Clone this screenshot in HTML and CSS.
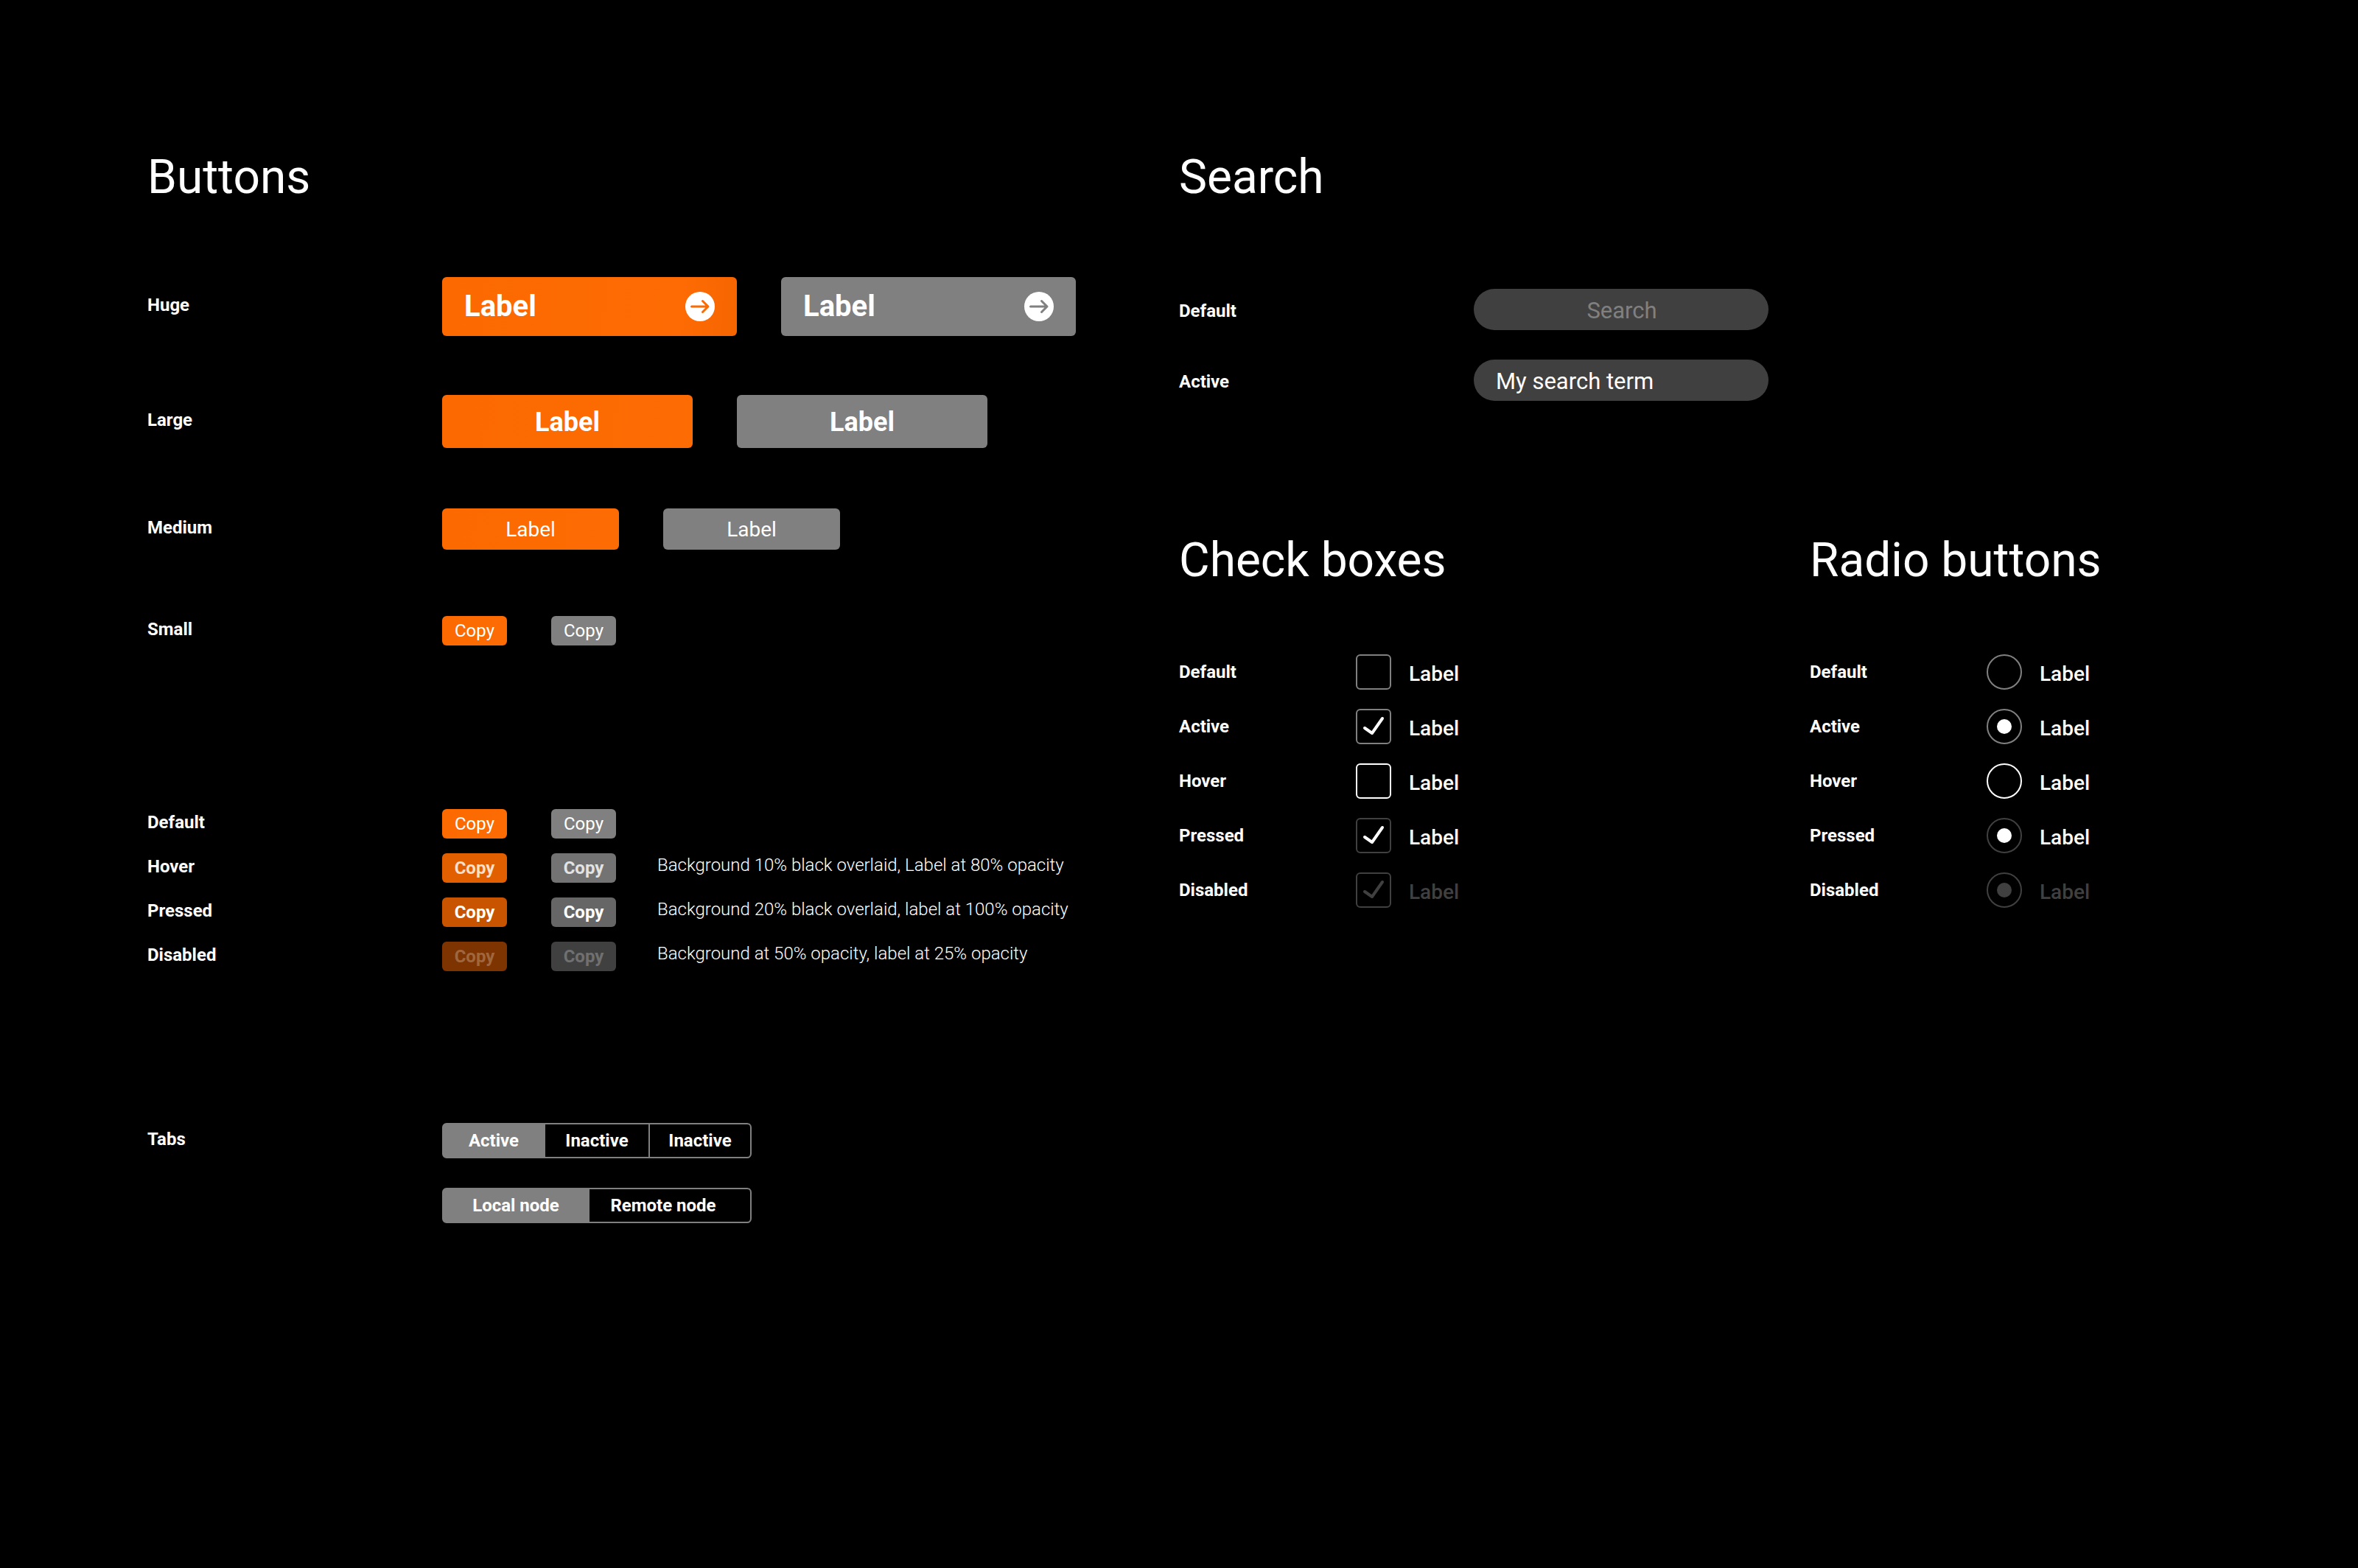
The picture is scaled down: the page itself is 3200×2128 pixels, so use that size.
FILE: index.html
```html
<!DOCTYPE html>
<html lang="en">
<head>
<meta charset="utf-8">
<meta name="viewport" content="width=device-width, initial-scale=1">
<title>Controls</title>
<link rel="stylesheet" href="styles.css">
</head>
<body>
<main class="sheet">
  <section class="column">
    <h1 class="heading">Buttons</h1>
    <div class="sizes">
      <div class="row row-huge">
        <span class="name">Huge</span>
        <button type="button" class="btn btn-huge primary">Label
          <svg class="arrow" viewBox="0 0 40 40" aria-hidden="true"><circle cx="20" cy="20" r="20"/><path d="M8.500 20H31M23.500 12.500L31 20L23.500 27.500"/></svg>
        </button>
        <button type="button" class="btn btn-huge secondary">Label
          <svg class="arrow" viewBox="0 0 40 40" aria-hidden="true"><circle cx="20" cy="20" r="20"/><path d="M8.500 20H31M23.500 12.500L31 20L23.500 27.500"/></svg>
        </button>
      </div>
      <div class="row row-large">
        <span class="name">Large</span>
        <button type="button" class="btn btn-large primary">Label</button>
        <button type="button" class="btn btn-large secondary">Label</button>
      </div>
      <div class="row row-medium">
        <span class="name">Medium</span>
        <button type="button" class="btn btn-medium primary">Label</button>
        <button type="button" class="btn btn-medium secondary">Label</button>
      </div>
      <div class="row">
        <span class="name">Small</span>
        <button type="button" class="btn btn-small primary">Copy</button>
        <button type="button" class="btn btn-small secondary">Copy</button>
      </div>
    </div>
    <div class="states">
      <div class="row">
        <span class="name">Default</span>
        <button type="button" class="btn btn-small primary">Copy</button>
        <button type="button" class="btn btn-small secondary">Copy</button>
      </div>
      <div class="row">
        <span class="name">Hover</span>
        <button type="button" class="btn btn-small primary is-hover">Copy</button>
        <button type="button" class="btn btn-small secondary is-hover">Copy</button>
        <span class="note">Background 10% black overlaid, Label at 80% opacity</span>
      </div>
      <div class="row">
        <span class="name">Pressed</span>
        <button type="button" class="btn btn-small primary is-pressed">Copy</button>
        <button type="button" class="btn btn-small secondary is-pressed">Copy</button>
        <span class="note">Background 20% black overlaid, label at 100% opacity</span>
      </div>
      <div class="row">
        <span class="name">Disabled</span>
        <button type="button" class="btn btn-small primary" disabled>Copy</button>
        <button type="button" class="btn btn-small secondary" disabled>Copy</button>
        <span class="note">Background at 50% opacity, label at 25% opacity</span>
      </div>
    </div>
    <div class="tab-sets">
      <div class="row">
        <span class="name">Tabs</span>
        <div class="tabs tabs-three" role="tablist">
          <button type="button" class="tab" role="tab" aria-selected="true">Active</button>
          <button type="button" class="tab divided" role="tab" aria-selected="false">Inactive</button>
          <button type="button" class="tab" role="tab" aria-selected="false">Inactive</button>
        </div>
      </div>
      <div class="row">
        <span class="name"></span>
        <div class="tabs tabs-two" role="tablist">
          <button type="button" class="tab" role="tab" aria-selected="true">Local node</button>
          <button type="button" class="tab" role="tab" aria-selected="false">Remote node</button>
        </div>
      </div>
    </div>
  </section>

  <div class="column">
    <section>
      <h1 class="heading">Search</h1>
      <div class="searches">
        <div class="row">
          <label class="name" for="search-default">Default</label>
          <input class="search" id="search-default" type="text" placeholder="Search">
        </div>
        <div class="row">
          <label class="name" for="search-active">Active</label>
          <input class="search" id="search-active" type="text" value="My search term">
        </div>
      </div>
    </section>
    <div class="choices">
      <section>
        <h1 class="heading">Check boxes</h1>
        <div class="options">
          <div class="option">
            <span class="name">Default</span>
            <label class="choice"><span class="box"><input type="checkbox"></span><span class="text">Label</span></label>
          </div>
          <div class="option">
            <span class="name">Active</span>
            <label class="choice"><span class="box"><input type="checkbox" checked><svg class="tick" viewBox="0 0 48 48" aria-hidden="true"><path d="M12 26L22 33L36 13"/></svg></span><span class="text">Label</span></label>
          </div>
          <div class="option">
            <span class="name">Hover</span>
            <label class="choice is-hover"><span class="box"><input type="checkbox"></span><span class="text">Label</span></label>
          </div>
          <div class="option">
            <span class="name">Pressed</span>
            <label class="choice is-pressed"><span class="box"><input type="checkbox" checked><svg class="tick" viewBox="0 0 48 48" aria-hidden="true"><path d="M12 26L22 33L36 13"/></svg></span><span class="text">Label</span></label>
          </div>
          <div class="option">
            <span class="name">Disabled</span>
            <label class="choice is-disabled"><span class="box"><input type="checkbox" checked disabled><svg class="tick" viewBox="0 0 48 48" aria-hidden="true"><path d="M12 26L22 33L36 13"/></svg></span><span class="text">Label</span></label>
          </div>
        </div>
      </section>
      <section>
        <h1 class="heading">Radio buttons</h1>
        <div class="options">
          <div class="option">
            <span class="name">Default</span>
            <label class="choice"><span class="box"><input type="radio" name="radio-default"></span><span class="text">Label</span></label>
          </div>
          <div class="option">
            <span class="name">Active</span>
            <label class="choice"><span class="box"><input type="radio" name="radio-active" checked></span><span class="text">Label</span></label>
          </div>
          <div class="option">
            <span class="name">Hover</span>
            <label class="choice is-hover"><span class="box"><input type="radio" name="radio-hover"></span><span class="text">Label</span></label>
          </div>
          <div class="option">
            <span class="name">Pressed</span>
            <label class="choice is-pressed"><span class="box"><input type="radio" name="radio-pressed" checked></span><span class="text">Label</span></label>
          </div>
          <div class="option">
            <span class="name">Disabled</span>
            <label class="choice is-disabled"><span class="box"><input type="radio" name="radio-disabled" checked disabled></span><span class="text">Label</span></label>
          </div>
        </div>
      </section>
    </div>
  </div>
</main>
</body>
</html>
```
FILE: styles.css
```css
* {
  box-sizing: border-box;
}

body {
  margin: 0;
  background: #000;
  color: #fff;
  font-family: Roboto, "Liberation Sans", sans-serif;
  font-size: 24px;
  line-height: 28px;
}

button,
input {
  margin: 0;
  font: inherit;
  color: inherit;
}

.sheet {
  display: grid;
  grid-template-columns: minmax(0, 7fr) minmax(0, 8fr);
  padding: 200px 0 200px 200px;
}

.heading {
  margin: 0;
  padding-top: 1px;
  font-size: 64px;
  line-height: 79px;
  font-weight: 400;
}

.row,
.option {
  display: flex;
  align-items: center;
}

.row {
  gap: 60px;
}

.name {
  flex: none;
  font-weight: 700;
}

.row .name {
  width: 340px;
  padding-bottom: 4px;
}

.option .name {
  width: 240px;
}

.sizes {
  margin-top: 96px;
}

.row-huge {
  margin-bottom: 80px;
}

.row-large {
  margin-bottom: 82px;
}

.row-medium {
  margin-bottom: 90px;
}

.states {
  display: grid;
  gap: 20px;
  margin-top: 222px;
}

.tab-sets {
  display: grid;
  gap: 40px;
  margin-top: 206px;
}

/* Buttons */

.btn {
  display: flex;
  flex: none;
  align-items: center;
  justify-content: center;
  padding: 0;
  border: 0;
  border-radius: 6px;
}

.primary {
  --fill: #fc6a03;
  background: linear-gradient(95deg, #fb6900, #fd6b04);
}

.secondary {
  --fill: #808080;
  background: var(--fill);
}

.btn-huge {
  justify-content: space-between;
  width: 400px;
  height: 80px;
  padding: 0 30px;
  font-size: 40px;
  line-height: 48px;
  font-weight: 700;
}

.btn-huge.primary {
  background: linear-gradient(95deg, #fb6900, #fe6b04 80%, #f56500);
}

.btn-large {
  width: 340px;
  height: 72px;
  padding-top: 2px;
  font-size: 36px;
  font-weight: 700;
}

.btn-medium {
  width: 240px;
  height: 56px;
  padding-top: 2px;
  font-size: 28px;
}

.btn-small {
  width: 88px;
  height: 40px;
}

.arrow {
  width: 40px;
  height: 40px;
  fill: #fff;
}

.arrow path {
  fill: none;
  stroke: var(--fill);
  stroke-width: 3;
  stroke-linecap: round;
  stroke-linejoin: round;
}

.is-hover,
.is-pressed,
.btn:disabled {
  font-weight: 700;
}

.primary.is-hover {
  background: #e25f00;
  color: #f9dfcc;
}

.secondary.is-hover {
  background: #737373;
  color: #e3e3e3;
}

.primary.is-pressed {
  background: #c95400;
}

.secondary.is-pressed {
  background: #666;
}

.primary:disabled {
  background: #7e3400;
  color: #9e6740;
}

.secondary:disabled {
  background: #404040;
  color: #707070;
}

.note {
  margin-left: -4px;
  padding-bottom: 8px;
  font-weight: 300;
}

/* Tabs */

.tabs {
  display: grid;
  width: 420px;
  height: 48px;
  border: 2px solid #808080;
  border-radius: 6px;
}

.tabs-three {
  grid-template-columns: 138px 142px 1fr;
}

.tabs-two {
  grid-template-columns: 198px 1fr;
}

.tab {
  padding: 0;
  border: 0;
  background: none;
  font-weight: 700;
}

.tab[aria-selected="true"] {
  padding-right: 2px;
  background: #808080;
}

.tab.divided {
  border-right: 2px solid #808080;
}

.tabs-two .tab[aria-selected="false"] {
  padding-right: 18px;
}

/* Search fields */

.searches {
  display: grid;
  gap: 40px;
  margin-top: 112px;
}

.searches .name {
  padding: 4px 0 0;
}

.search {
  width: 400px;
  height: 56px;
  padding: 2px 28px 0 30px;
  border: 0;
  border-radius: 28px;
  background: #404040;
  font-size: 31px;
}

.search::placeholder {
  color: #808080;
  opacity: 1;
  text-align: center;
}

/* Check boxes and radio buttons */

.choices {
  display: grid;
  grid-template-columns: minmax(0, 107fr) minmax(0, 93fr);
  margin-top: 176px;
}

.options {
  display: grid;
  gap: 26px;
  margin-top: 88px;
}

.choice {
  --line: #808080;
  --mark: #fff;
  display: flex;
  align-items: center;
  gap: 24px;
  font-size: 28px;
  line-height: 32px;
  font-weight: 500;
}

.choice.is-hover {
  --line: #fff;
}

.choice.is-pressed {
  --line: #404040;
}

.choice.is-disabled {
  --line: #404040;
  --mark: #404040;
  color: #404040;
}

.choice .text {
  padding-top: 6px;
}

.box {
  display: grid;
}

.box > * {
  grid-area: 1 / 1;
  width: 48px;
  height: 48px;
}

.box input {
  display: grid;
  place-items: center;
  appearance: none;
  border: 2px solid var(--line);
  border-radius: 6px;
}

.box input[type="radio"] {
  border-radius: 50%;
}

.box input[type="radio"]:checked::before {
  content: "";
  width: 20px;
  height: 20px;
  border-radius: 50%;
  background: var(--mark);
}

.tick {
  fill: none;
  stroke: var(--mark);
  stroke-width: 4;
  stroke-linecap: round;
  stroke-linejoin: round;
  pointer-events: none;
}

@media (max-width: 2600px) {
  .sheet {
    grid-template-columns: minmax(0, 1fr);
    gap: 160px;
  }
}
```
